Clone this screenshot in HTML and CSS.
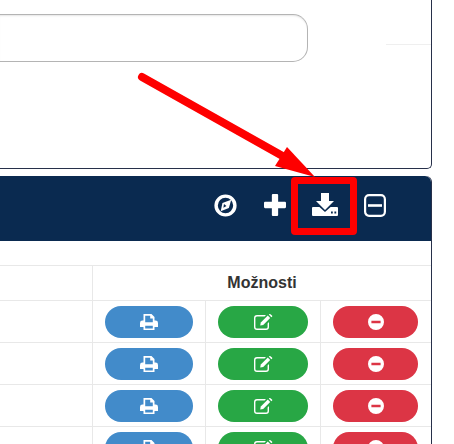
FILE: index.html
```html
<!DOCTYPE html>
<html lang="en">

<head>
    <meta charset="UTF-8">
    <meta name="viewport" content="width=device-width, initial-scale=1.0">
    <title>Možnosti</title>
    <link rel="stylesheet" href="styles.css">
</head>

<body>
    <svg class="sprites" width="0" height="0">
        <symbol id="i-print" viewBox="0 0 18 16">
            <path fill-rule="evenodd" d="M3.5 0H11.5L14.5 3V6.6H15.5Q18 6.6 18 9V13H14.5V16H3.5V13H0V9Q0 6.6 2.5 6.6H3.5ZM5.2 1.7V8.2H12.8V4.4H10.2V1.7ZM5.2 11.8V14.4H12.8V11.8Z" />
        </symbol>
        <symbol id="i-edit" viewBox="0 0 19 16">
            <path d="M3 1H12L10.6 2.4H3Q1.4 2.4 1.4 4V13Q1.4 14.6 3 14.6H12Q13.6 14.6 13.6 13V9.4L15 8V13Q15 16 12 16H3Q0 16 0 13V4Q0 1 3 1Z" />
            <path d="M6.8 8.6L13.8 1.6L16.2 4L9.2 11L6.2 11.6Z" />
            <path d="M14.8 0.6L15.6 0.1Q16.2 -0.2 16.8 0.4L18 1.6Q18.5 2.2 18 2.8L17.3 3.2Z" />
        </symbol>
        <symbol id="i-minus" viewBox="0 0 16 16">
            <path fill-rule="evenodd" d="M8 0A8 8 0 1 1 8 16A8 8 0 1 1 8 0ZM3.4 6.7V9.3H12.6V6.7Z" />
        </symbol>
    </svg>

    <div class="card top-card">
        <div class="search-row">
            <div class="search-box"></div>
            <div class="faint-rule"></div>
        </div>
    </div>

    <div class="card list-card">
        <div class="list-head">
            <svg class="tool" width="23" height="23" viewBox="0 0 24 24">
                <circle cx="12" cy="12" r="9.8" fill="none" stroke="#fff" stroke-width="3.6" />
                <path fill="#fff" fill-rule="evenodd" d="M18 6L15.5 14.5L7 18L8.8 9.5ZM10.4 10.4L9.8 14.4L13 12.6Z" />
            </svg>
            <svg class="tool tool-plus" width="22" height="22" viewBox="0 0 21 21">
                <path fill="#fff" d="M8.5 0H12.5Q13.5 0 13.5 1V7.5H20Q21 7.5 21 8.5V12.5Q21 13.5 20 13.5H13.5V20Q13.5 21 12.5 21H8.5Q7.5 21 7.5 20V13.5H1Q0 13.5 0 12.5V8.5Q0 7.5 1 7.5H7.5V1Q7.5 0 8.5 0Z" />
            </svg>
            <div class="tool-marked">
                <svg width="26" height="23" viewBox="0 0 26 23">
                    <path fill="#fff" d="M9 0H17V8H22L13 17L4 8H9Z" />
                    <path fill="#fff" fill-rule="evenodd" d="M1 14H7.4L13 19L18.6 14H25Q26 14 26 15V22Q26 23 25 23H1Q0 23 0 22V15Q0 14 1 14ZM19 18.6V20.4H20.8V18.6ZM22.4 18.6V20.4H24.2V18.6Z" />
                </svg>
            </div>
            <svg class="tool" width="22" height="23" viewBox="0 0 22 23">
                <rect x="1.1" y="1.2" width="19.8" height="20.6" rx="4" fill="none" stroke="#fff" stroke-width="2.2" />
                <rect x="4" y="10.2" width="14" height="2.6" fill="#fff" />
            </svg>
        </div>

        <table class="list-table">
            <colgroup>
                <col class="col-main">
                <col class="col-print">
                <col class="col-edit">
                <col class="col-del">
            </colgroup>
            <tr class="row-blank">
                <td colspan="4"></td>
            </tr>
            <tr class="row-head">
                <td></td>
                <th colspan="3">Možnosti</th>
            </tr>
            <tr>
                <td></td>
                <td><a class="pill pill-blue"><svg width="18" height="16"><use href="#i-print" /></svg></a></td>
                <td><a class="pill pill-green"><svg width="19" height="16"><use href="#i-edit" /></svg></a></td>
                <td class="cell-del"><a class="pill pill-red"><svg width="16" height="16"><use href="#i-minus" /></svg></a></td>
            </tr>
            <tr>
                <td></td>
                <td><a class="pill pill-blue"><svg width="18" height="16"><use href="#i-print" /></svg></a></td>
                <td><a class="pill pill-green"><svg width="19" height="16"><use href="#i-edit" /></svg></a></td>
                <td class="cell-del"><a class="pill pill-red"><svg width="16" height="16"><use href="#i-minus" /></svg></a></td>
            </tr>
            <tr>
                <td></td>
                <td><a class="pill pill-blue"><svg width="18" height="16"><use href="#i-print" /></svg></a></td>
                <td><a class="pill pill-green"><svg width="19" height="16"><use href="#i-edit" /></svg></a></td>
                <td class="cell-del"><a class="pill pill-red"><svg width="16" height="16"><use href="#i-minus" /></svg></a></td>
            </tr>
            <tr>
                <td></td>
                <td><a class="pill pill-blue"><svg width="18" height="16"><use href="#i-print" /></svg></a></td>
                <td><a class="pill pill-green"><svg width="19" height="16"><use href="#i-edit" /></svg></a></td>
                <td class="cell-del"><a class="pill pill-red"><svg width="16" height="16"><use href="#i-minus" /></svg></a></td>
            </tr>
        </table>
    </div>

    <!-- arrow drawn on top of the screenshot -->
    <svg class="arrow" width="454" height="444" viewBox="0 0 454 444">
        <line x1="142" y1="77" x2="295" y2="163" stroke="#fe0000" stroke-width="8" stroke-linecap="round" />
        <polygon points="287,147 275,166 315,177" fill="#fe0000" />
    </svg>
</body>

</html>
```

FILE: styles.css
```css
body {
    margin: 0;
    width: 454px;
    height: 444px;
    overflow: hidden;
    position: relative;
    background-color: white;
    font-family: "Liberation Sans", Arial, sans-serif;
}

.sprites {
    display: block;
    height: 0;
}

.card {
    width: 432px;
    box-sizing: border-box;
    background-color: white;
    border-right: 1px solid #27304a;
}

.top-card {
    height: 169px;
    margin-bottom: 7px;
    padding-top: 14px;
    border-bottom: 1px solid #27304a;
    border-bottom-right-radius: 5px;
}

.search-row {
    display: flex;
    justify-content: space-between;
}

.search-box {
    width: 308px;
    height: 48px;
    box-sizing: border-box;
    border: 1px solid #b4b4b4;
    border-left: 0;
    border-radius: 0 15px 15px 0;
    box-shadow: inset 0 2px 2px -1px #e6e6e6;
}

.faint-rule {
    width: 45px;
    height: 1px;
    margin-top: 30px;
    background-color: #efefef;
}

.list-card {
    border-top-right-radius: 6px;
}

.list-head {
    height: 65px;
    box-sizing: border-box;
    display: flex;
    align-items: center;
    justify-content: flex-end;
    padding-right: 45px;
    padding-bottom: 7px;
    background-color: #0a2a50;
    border-top-right-radius: 6px;
}

.tool {
    flex: none;
}

.tool-plus {
    margin-left: 27px;
    margin-right: 5px;
}

.tool-marked {
    width: 66px;
    height: 58px;
    box-sizing: border-box;
    margin-top: 2px;
    margin-right: 7px;
    padding-left: 2px;
    padding-bottom: 3px;
    display: flex;
    align-items: center;
    justify-content: center;
    border: 7px solid #fe0000;
    border-radius: 4px;
}

.list-table {
    width: 431px;
    table-layout: fixed;
    border-collapse: separate;
    border-spacing: 0;
}

.col-main {
    width: 92px;
}

.col-print {
    width: 113px;
}

.col-edit {
    width: 115px;
}

.list-table td,
.list-table th {
    height: 42px;
    padding: 0;
    box-sizing: border-box;
    border-bottom: 1px solid #e8e8e8;
    border-left: 1px solid #e8e8e8;
}

.list-table tr td:first-child {
    border-left: 0;
}

.list-table td {
    padding: 0 12px;
}

.list-table .cell-del {
    padding-right: 13px;
}

.list-table .row-blank td {
    height: 25px;
}

.row-head td,
.row-head th {
    height: 35px;
}

.row-head th {
    font-size: 16px;
    font-weight: bold;
    color: #333;
    text-align: center;
}

.pill {
    height: 32px;
    display: flex;
    align-items: center;
    justify-content: center;
    border-radius: 16px;
    fill: white;
}

.pill-blue {
    background-color: #428bca;
}

.pill-green {
    background-color: #28a745;
}

.pill-red {
    background-color: #dc3545;
}

.arrow {
    position: absolute;
    left: 0;
    top: 0;
    pointer-events: none;
}
```
